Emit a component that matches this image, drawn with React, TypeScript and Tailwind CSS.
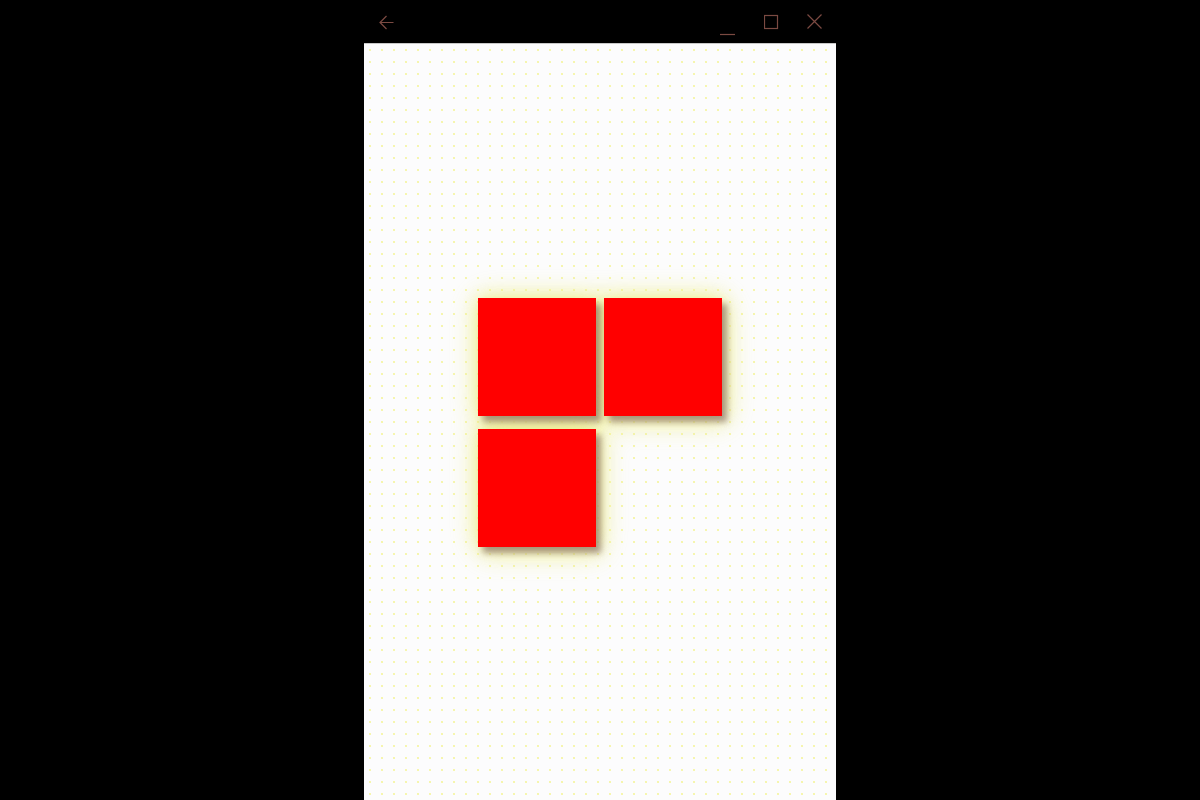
import React from "react";

const Sq = () => <div className="w-[118px] h-[118px] bg-[#ff0000]" />;

export default function App() {
  return (
    <div className="w-[1200px] h-[800px] bg-black flex justify-center overflow-hidden">
      <div className="w-[472px] h-[800px] flex flex-col">
        <div className="h-[43px] flex items-center justify-between shrink-0">
          <div className="pl-[15px] pt-[1px]">
            <svg width="15" height="15" viewBox="0 0 15 15" fill="none" stroke="#7b4a42" strokeWidth="1.2">
              <path d="M14.5 7.5H1M7.5 1L1 7.5L7.5 14" />
            </svg>
          </div>
          <div className="flex items-center pr-[14px]">
            <svg width="16" height="16" viewBox="0 0 16 16" fill="none" stroke="#7b4a42" strokeWidth="1.2" className="mt-[12px]">
              <path d="M0 14.5H15" />
            </svg>
            <div className="w-[28px]" />
            <svg width="15" height="16" viewBox="0 0 15 16" fill="none" stroke="#7b4a42" strokeWidth="1.2">
              <rect x="0.5" y="1.5" width="13" height="13" />
            </svg>
            <div className="w-[28px]" />
            <svg width="15" height="15" viewBox="0 0 15 15" fill="none" stroke="#7b4a42" strokeWidth="1.2">
              <path d="M0.5 0.5L14.5 14.5M14.5 0.5L0.5 14.5" />
            </svg>
          </div>
        </div>
        <div className="flex-1 border-t border-[#c8c8c8] flex items-center justify-center bg-[#fcfcfd] bg-[radial-gradient(circle,rgba(240,240,120,0.6)_0.7px,transparent_1.1px)] bg-[length:12px_12px]">
          <div className="grid grid-cols-[118px_118px] gap-x-[8px] gap-y-[13px] mt-[1px] [filter:drop-shadow(5px_6px_3px_rgba(120,90,90,0.6))_drop-shadow(0_0_8px_rgba(235,235,130,0.7))_drop-shadow(0_0_14px_rgba(240,240,150,0.8))]">
            <Sq />
            <Sq />
            <Sq />
          </div>
        </div>
      </div>
    </div>
  );
}
